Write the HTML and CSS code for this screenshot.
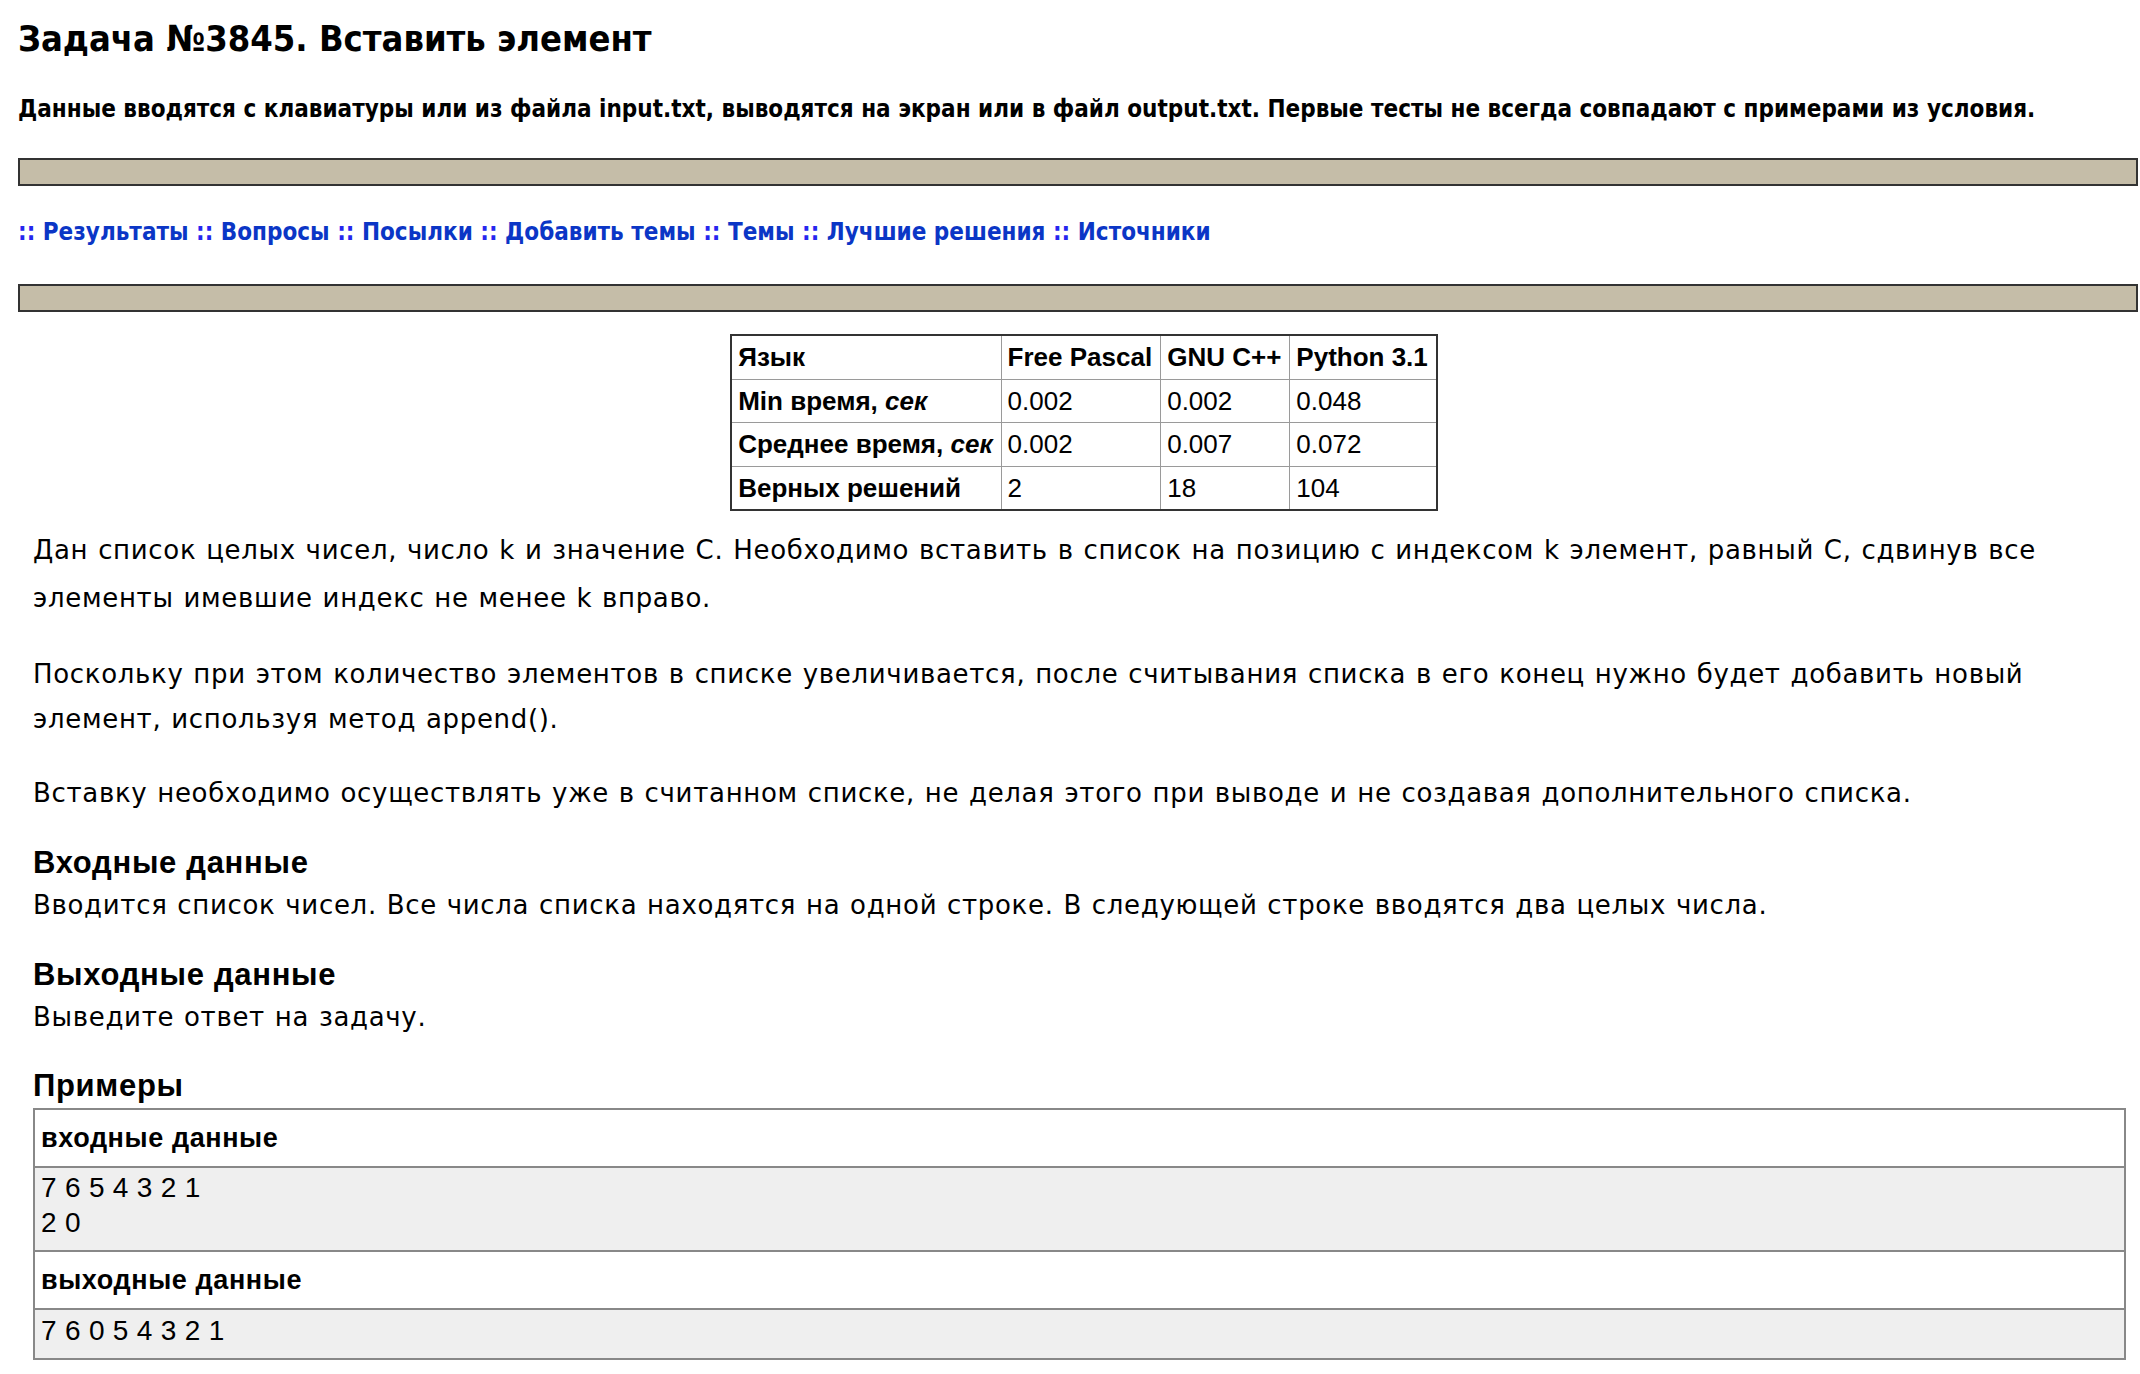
FILE: index.html
```html
<!DOCTYPE html>
<html lang="ru">
<head>
<meta charset="utf-8">
<title>Задача №3845. Вставить элемент</title>
<link rel="stylesheet" href="styles.css">
</head>
<body>
<div class="page">
  <h1 class="title">Задача №3845. Вставить элемент</h1>
  <p class="notice">Данные вводятся с клавиатуры или из файла input.txt, выводятся на экран или в файл output.txt. Первые тесты не всегда совпадают с примерами из условия.</p>
  <div class="bar"></div>
  <nav class="nav"><span class="sep">::</span> <a href="#">Результаты</a> <span class="sep">::</span> <a href="#">Вопросы</a> <span class="sep">::</span> <a href="#">Посылки</a> <span class="sep">::</span> <a href="#">Добавить темы</a> <span class="sep">::</span> <a href="#">Темы</a> <span class="sep">::</span> <a href="#">Лучшие решения</a> <span class="sep">::</span> <a href="#">Источники</a></nav>
  <div class="bar bar-second"></div>
  <div class="content">
    <div class="stats-wrap">
      <table class="stats">
        <tr><th>Язык</th><th>Free Pascal</th><th>GNU C++</th><th>Python 3.1</th></tr>
        <tr><th>Min время, <i>сек</i></th><td>0.002</td><td>0.002</td><td>0.048</td></tr>
        <tr><th>Среднее время, <i>сек</i></th><td>0.002</td><td>0.007</td><td>0.072</td></tr>
        <tr><th>Верных решений</th><td>2</td><td>18</td><td>104</td></tr>
      </table>
    </div>
    <p class="text text-first">Дан список целых чисел, число k и значение C. Необходимо вставить в список на позицию с индексом k элемент, равный C, сдвинув все элементы имевшие индекс не менее k вправо.</p>
    <p class="text text-para">Поскольку при этом количество элементов в списке увеличивается, после считывания списка в его конец нужно будет добавить новый элемент, используя метод append().</p>
    <p class="text text-para">Вставку необходимо осуществлять уже в считанном списке, не делая этого при выводе и не создавая дополнительного списка.</p>
    <h3 class="section">Входные данные</h3>
    <p class="text text-tight">Вводится список чисел. Все числа списка находятся на одной строке. В следующей строке вводятся два целых числа.</p>
    <h3 class="section">Выходные данные</h3>
    <p class="text text-tight">Выведите ответ на задачу.</p>
    <h3 class="section section-last">Примеры</h3>
    <table class="sample">
      <tr><th>входные данные</th></tr>
      <tr><td><pre class="sample-data">7 6 5 4 3 2 1
2 0</pre></td></tr>
      <tr><th>выходные данные</th></tr>
      <tr><td><pre class="sample-data">7 6 0 5 4 3 2 1</pre></td></tr>
    </table>
  </div>
</div>
</body>
</html>
```

FILE: styles.css
```css
html, body {
  margin: 0;
  padding: 0;
  background: #ffffff;
  color: #000000;
}

.page {
  padding: 18px 2px 0 18px;
}

.title {
  margin: 0;
  font-family: "DejaVu Sans Condensed", "DejaVu Sans", sans-serif;
  font-stretch: condensed;
  font-weight: bold;
  font-size: 36px;
  line-height: 42px;
}

.notice {
  margin: 35px 0 0;
  font-family: "DejaVu Sans Condensed", "DejaVu Sans", sans-serif;
  font-stretch: condensed;
  font-weight: bold;
  font-size: 24px;
  line-height: 28px;
}

.bar {
  margin-top: 35px;
  height: 24px;
  background: #c5bda8;
  border: 2px solid #333333;
}

.nav {
  margin-top: 32px;
  font-family: "DejaVu Sans Condensed", "DejaVu Sans", sans-serif;
  font-stretch: condensed;
  font-weight: bold;
  font-size: 24px;
  line-height: 28px;
}

.nav a {
  color: #0b36c6;
  text-decoration: none;
}

.nav .sep {
  color: #2626ee;
}

.bar-second {
  margin-top: 38px;
}

.content {
  padding: 0 12px 0 15px;
}

.stats-wrap {
  padding-left: 9px;
  margin-top: 22px;
}

.stats {
  margin: 0 auto;
  border-collapse: collapse;
  border: 2px solid #333333;
  font-family: "Liberation Sans", Arial, sans-serif;
  font-size: 26px;
  line-height: 30px;
}

.stats th,
.stats td {
  border: 1px solid #9a9a9a;
  padding: 6px 8px 6.5px 6px;
  text-align: left;
  white-space: nowrap;
}

.stats th {
  font-weight: bold;
}

.stats td {
  font-weight: normal;
}

.text {
  margin: 0;
  font-family: "DejaVu Sans", Verdana, sans-serif;
  font-size: 26px;
  line-height: 45px;
  letter-spacing: 0.68px;
  word-spacing: 0.9px;
}

.text-first {
  margin-top: 15px;
  line-height: 48px;
}

.text-para {
  margin-top: 29.5px;
}

.text-tight {
  margin-top: 4px;
}

.section {
  margin: 31px 0 0;
  font-family: "Liberation Sans", Arial, sans-serif;
  font-weight: bold;
  font-size: 31px;
  line-height: 32px;
  letter-spacing: 0.7px;
}

.section-last {
  margin-top: 30px;
}

.sample {
  margin-top: 5.5px;
  width: 100%;
  border-collapse: collapse;
  border: 2px solid #888888;
}

.sample th,
.sample td {
  border: 2px solid #888888;
  text-align: left;
  padding: 0;
}

.sample th {
  background: #ffffff;
  padding: 13px 6px;
  font-family: "Liberation Sans", Arial, sans-serif;
  font-weight: bold;
  font-size: 27px;
  line-height: 30px;
  letter-spacing: 0.6px;
}

.sample td {
  background: #efefef;
}

.sample-data {
  margin: 0;
  padding: 2.5px 6px 10px;
  font-family: "Liberation Sans", Arial, sans-serif;
  font-size: 28px;
  line-height: 35px;
  letter-spacing: 0.3px;
  white-space: pre;
}
```
